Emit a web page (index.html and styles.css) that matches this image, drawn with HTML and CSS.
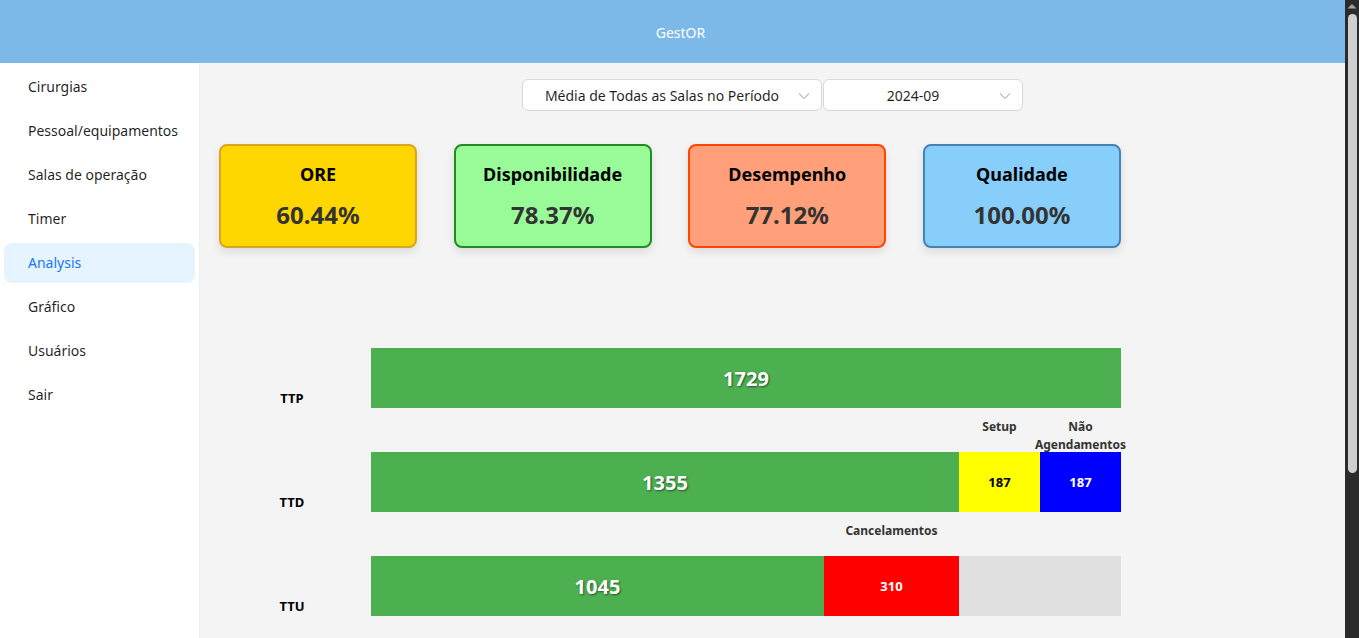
FILE: index.html
```html
<!DOCTYPE html>
<html lang="pt">
<head>
<meta charset="utf-8">
<title>GestOR</title>
<link rel="stylesheet" href="styles.css">
</head>
<body>
<div class="viewport">
<header class="topbar">GestOR</header>
<div class="layout">
  <aside class="sider">
    <ul class="menu">
      <li class="menu-item">Cirurgias</li>
      <li class="menu-item">Pessoal/equipamentos</li>
      <li class="menu-item">Salas de operação</li>
      <li class="menu-item">Timer</li>
      <li class="menu-item selected">Analysis</li>
      <li class="menu-item">Gráfico</li>
      <li class="menu-item">Usuários</li>
      <li class="menu-item">Sair</li>
    </ul>
  </aside>
  <main class="content">
    <div class="filters">
      <div class="select select-wide">
        <span class="select-text">Média de Todas as Salas no Período</span>
        <svg class="chevron" viewBox="0 0 12 8" width="12" height="8"><path d="M1 1.5 L6 6.5 L11 1.5" fill="none" stroke="#bfbfbf" stroke-width="1.1"/></svg>
      </div>
      <div class="select select-narrow">
        <span class="select-text">2024-09</span>
        <svg class="chevron" viewBox="0 0 12 8" width="12" height="8"><path d="M1 1.5 L6 6.5 L11 1.5" fill="none" stroke="#bfbfbf" stroke-width="1.1"/></svg>
      </div>
    </div>

    <div class="cards">
      <div class="card card-ore">
        <div class="card-title">ORE</div>
        <div class="card-value">60.44%</div>
      </div>
      <div class="card card-disp">
        <div class="card-title">Disponibilidade</div>
        <div class="card-value">78.37%</div>
      </div>
      <div class="card card-des">
        <div class="card-title">Desempenho</div>
        <div class="card-value">77.12%</div>
      </div>
      <div class="card card-qual">
        <div class="card-title">Qualidade</div>
        <div class="card-value">100.00%</div>
      </div>
    </div>

    <div class="chart">
      <div class="chart-row">
        <div class="row-label">TTP</div>
        <div class="bar">
          <div class="seg seg-green" style="width: 750px;"><span class="big">1729</span></div>
        </div>
      </div>
      <div class="chart-row">
        <div class="row-label">TTD</div>
        <div class="bar">
          <div class="seg seg-green" style="width: 588px;"><span class="big">1355</span></div>
          <div class="seg seg-yellow" style="width: 81px;"><span class="note">Setup</span><span class="small">187</span></div>
          <div class="seg seg-blue" style="width: 81px;"><span class="note">Não Agendamentos</span><span class="small">187</span></div>
        </div>
      </div>
      <div class="chart-row">
        <div class="row-label">TTU</div>
        <div class="bar">
          <div class="seg seg-green" style="width: 453px;"><span class="big">1045</span></div>
          <div class="seg seg-red" style="width: 135px;"><span class="note">Cancelamentos</span><span class="small">310</span></div>
          <div class="seg seg-empty" style="width: 162px;"></div>
        </div>
      </div>
    </div>
  </main>
</div>
</div>
<div class="scrollbar" aria-hidden="true">
  <svg class="scroll-arrow" viewBox="0 0 14 14" width="14" height="14"><path d="M2.5 8.5 L7 4 L11.5 8.5 Z" fill="#a3a3a3"/></svg>
  <div class="scroll-thumb"></div>
</div>
</body>
</html>
```

FILE: styles.css
```css
* { box-sizing: border-box; }

html, body {
  margin: 0;
  padding: 0;
  height: 100%;
  overflow: hidden;
}

body {
  font-family: "Segoe UI", "Noto Sans", Arial, sans-serif;
  font-size: 14px;
  color: rgba(0, 0, 0, 0.88);
  background: #f4f4f4;
  padding-right: 14px;
}

.viewport {
  height: 100vh;
  overflow-y: auto;
}

/* browser scrollbar (drawn, since the headless view hides native ones) */
.scrollbar {
  position: fixed;
  top: 0;
  right: 0;
  width: 14px;
  height: 100vh;
  background: #2b2b2b;
}

.scroll-arrow {
  display: block;
}

.scroll-thumb {
  position: absolute;
  top: 14px;
  left: 3px;
  width: 9px;
  height: 459px;
  background: #cfcfcf;
  border-radius: 5px;
}

.topbar {
  height: 63px;
  background: #7cb9e8;
  color: #ffffff;
  display: flex;
  align-items: center;
  justify-content: center;
  padding-left: 16px;
  padding-top: 1px;
  font-size: 14px;
}

.layout {
  display: flex;
  min-height: 786px;
}

.sider {
  width: 200px;
  flex: 0 0 200px;
  background: #ffffff;
  border-right: 1px solid #f0f0f0;
}

.menu {
  list-style: none;
  margin: 0;
  padding: 4px 0 0;
}

.menu-item {
  height: 40px;
  line-height: 40px;
  margin: 0 4px 4px;
  padding-left: 24px;
  border-radius: 8px;
  color: rgba(0, 0, 0, 0.88);
  white-space: nowrap;
}

.menu-item.selected {
  background: #e6f4ff;
  color: #1677ff;
}

.content {
  flex: 1;
  padding: 16px 20px 20px 19px;
}

.filters {
  display: flex;
  justify-content: center;
  gap: 1px;
}

.select {
  position: relative;
  height: 32px;
  background: #ffffff;
  border: 1px solid #d9d9d9;
  border-radius: 6px;
  display: flex;
  align-items: center;
  padding: 0 30px 0 11px;
}

.select-wide { width: 300px; }
.select-narrow { width: 200px; }

.select-text {
  flex: 1;
  text-align: center;
  white-space: nowrap;
}

.chevron {
  position: absolute;
  right: 11px;
  top: 12px;
}

.cards {
  display: flex;
  justify-content: space-between;
  width: 902px;
  margin-top: 33px;
}

.card {
  width: 198px;
  height: 104px;
  border: 2px solid;
  border-radius: 8px;
  box-shadow: 0 4px 8px rgba(0, 0, 0, 0.1);
  display: flex;
  flex-direction: column;
  align-items: center;
  padding-top: 15px;
}

.card-title {
  font-size: 18px;
  font-weight: 700;
  color: #000;
  line-height: 26px;
}

.card-value {
  font-size: 24px;
  font-weight: 700;
  color: #333;
  line-height: 32px;
  margin-top: 12px;
}

.card-ore { background: #ffd700; border-color: #daa520; }
.card-disp { background: #98fb98; border-color: #228b22; }
.card-des { background: #ffa07a; border-color: #ff4500; }
.card-qual { background: #87cefa; border-color: #4682b4; }

.chart {
  margin-top: 56px;
  display: flex;
  flex-direction: column;
  gap: 44px;
  padding-top: 44px;
}

.chart-row {
  display: flex;
  align-items: flex-end;
}

.row-label {
  width: 146px;
  margin-right: 6px;
  text-align: center;
  font-size: 13px;
  font-weight: 700;
  color: #000;
  line-height: 18px;
  padding-bottom: 1px;
}

.bar {
  display: flex;
  width: 750px;
  height: 60px;
}

.seg {
  position: relative;
  height: 60px;
  display: flex;
  align-items: center;
  justify-content: center;
}

.seg-green { background: #4caf50; }
.seg-yellow { background: #ffff00; color: #000; }
.seg-blue { background: #0000ff; color: #fff; }
.seg-red { background: #ff0000; color: #fff; }
.seg-empty { background: #e0e0e0; }

.big {
  color: #ffffff;
  font-size: 20px;
  font-weight: 700;
  text-shadow: 1px 1px 2px rgba(0, 0, 0, 0.5);
}

.small {
  font-size: 13px;
  font-weight: 700;
}

.note {
  position: absolute;
  top: -34px;
  left: -10px;
  right: -10px;
  text-align: center;
  font-size: 12px;
  font-weight: 700;
  color: #333;
  line-height: 18px;
}
```
